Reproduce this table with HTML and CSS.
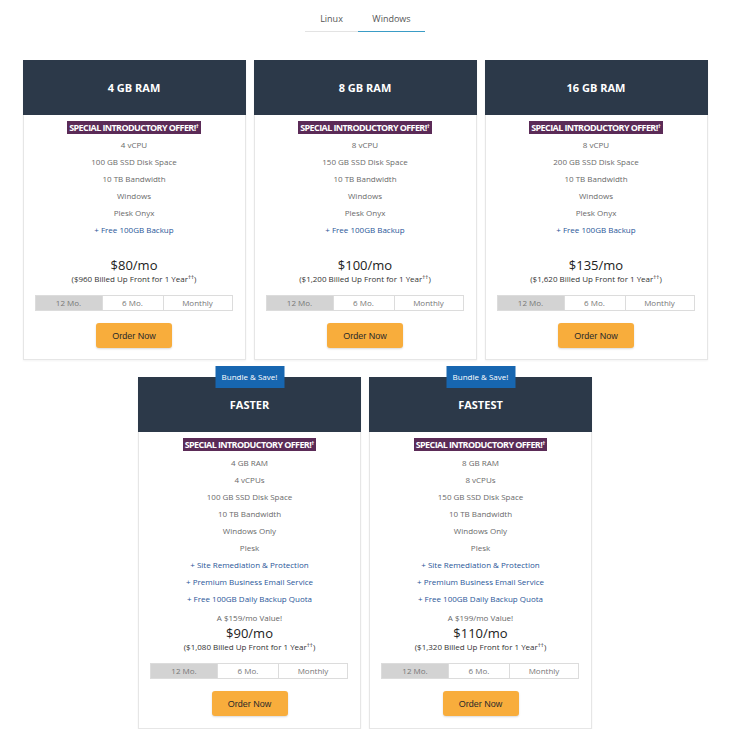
FILE: index.html
```html
<!DOCTYPE html>
<html>
<head>
<meta charset="utf-8">
<link rel="stylesheet" href="styles.css">
</head>
<body>
<div class="page">
  <div class="tabs">
    <div class="tab tab-linux">Linux</div>
    <div class="tab tab-windows active">Windows</div>
  </div>

  <div class="row">
    <div class="card">
      <div class="card-head">4 GB RAM</div>
      <div class="card-body">
        <div class="offer">SPECIAL INTRODUCTORY OFFER!<sup>†</sup></div>
        <ul class="features">
          <li>4 vCPU</li>
          <li>100 GB SSD Disk Space</li>
          <li>10 TB Bandwidth</li>
          <li>Windows</li>
          <li>Plesk Onyx</li>
          <li class="extra">+ Free 100GB Backup</li>
        </ul>
        <div class="price price-first">$80/mo</div>
        <div class="billed">($960 Billed Up Front for 1 Year<sup>††</sup>)</div>
        <div class="seg"><span class="on s1">12 Mo.</span><span class="s2">6 Mo.</span><span class="s3">Monthly</span></div>
        <button class="order">Order Now</button>
      </div>
    </div>
    <div class="card">
      <div class="card-head">8 GB RAM</div>
      <div class="card-body">
        <div class="offer">SPECIAL INTRODUCTORY OFFER!<sup>†</sup></div>
        <ul class="features">
          <li>8 vCPU</li>
          <li>150 GB SSD Disk Space</li>
          <li>10 TB Bandwidth</li>
          <li>Windows</li>
          <li>Plesk Onyx</li>
          <li class="extra">+ Free 100GB Backup</li>
        </ul>
        <div class="price price-first">$100/mo</div>
        <div class="billed">($1,200 Billed Up Front for 1 Year<sup>††</sup>)</div>
        <div class="seg"><span class="on s1">12 Mo.</span><span class="s2">6 Mo.</span><span class="s3">Monthly</span></div>
        <button class="order">Order Now</button>
      </div>
    </div>
    <div class="card">
      <div class="card-head">16 GB RAM</div>
      <div class="card-body">
        <div class="offer">SPECIAL INTRODUCTORY OFFER!<sup>†</sup></div>
        <ul class="features">
          <li>8 vCPU</li>
          <li>200 GB SSD Disk Space</li>
          <li>10 TB Bandwidth</li>
          <li>Windows</li>
          <li>Plesk Onyx</li>
          <li class="extra">+ Free 100GB Backup</li>
        </ul>
        <div class="price price-first">$135/mo</div>
        <div class="billed">($1,620 Billed Up Front for 1 Year<sup>††</sup>)</div>
        <div class="seg"><span class="on s1">12 Mo.</span><span class="s2">6 Mo.</span><span class="s3">Monthly</span></div>
        <button class="order">Order Now</button>
      </div>
    </div>
  </div>

  <div class="row row2">
    <div class="card">
      <div class="bundle">Bundle &amp; Save!</div>
      <div class="card-head">FASTER</div>
      <div class="card-body">
        <div class="offer">SPECIAL INTRODUCTORY OFFER!<sup>†</sup></div>
        <ul class="features">
          <li>4 GB RAM</li>
          <li>4 vCPUs</li>
          <li>100 GB SSD Disk Space</li>
          <li>10 TB Bandwidth</li>
          <li>Windows Only</li>
          <li>Plesk</li>
          <li class="extra">+ Site Remediation &amp; Protection</li>
          <li class="extra">+ Premium Business Email Service</li>
          <li class="extra">+ Free 100GB Daily Backup Quota</li>
        </ul>
        <div class="value">A $159/mo Value!</div>
        <div class="price">$90/mo</div>
        <div class="billed">($1,080 Billed Up Front for 1 Year<sup>††</sup>)</div>
        <div class="seg"><span class="on s1">12 Mo.</span><span class="s2">6 Mo.</span><span class="s3">Monthly</span></div>
        <button class="order">Order Now</button>
      </div>
    </div>
    <div class="card">
      <div class="bundle">Bundle &amp; Save!</div>
      <div class="card-head">FASTEST</div>
      <div class="card-body">
        <div class="offer">SPECIAL INTRODUCTORY OFFER!<sup>†</sup></div>
        <ul class="features">
          <li>8 GB RAM</li>
          <li>8 vCPUs</li>
          <li>150 GB SSD Disk Space</li>
          <li>10 TB Bandwidth</li>
          <li>Windows Only</li>
          <li>Plesk</li>
          <li class="extra">+ Site Remediation &amp; Protection</li>
          <li class="extra">+ Premium Business Email Service</li>
          <li class="extra">+ Free 100GB Daily Backup Quota</li>
        </ul>
        <div class="value">A $199/mo Value!</div>
        <div class="price">$110/mo</div>
        <div class="billed">($1,320 Billed Up Front for 1 Year<sup>††</sup>)</div>
        <div class="seg"><span class="on s1">12 Mo.</span><span class="s2">6 Mo.</span><span class="s3">Monthly</span></div>
        <button class="order">Order Now</button>
      </div>
    </div>
  </div>
</div>
</body>
</html>
```

FILE: styles.css
```css
* { box-sizing: border-box; }
html, body { margin: 0; padding: 0; background: #fff; }
body {
  font-family: "Open Sans", "DejaVu Sans", sans-serif;
  color: #666;
}
.page {
  width: 730px;
  padding-top: 8px;
}
.tabs {
  display: flex;
  justify-content: center;
  height: 24px;
  margin-bottom: 28px;
}
.tab {
  font-size: 9px;
  color: #555;
  text-align: center;
  line-height: 20px;
  padding-top: 1px;
}
.tab-linux {
  width: 53px;
  border-bottom: 1px solid #e3e3e3;
}
.tab-windows {
  width: 67px;
  border-bottom: 1px solid #3a9cc6;
}
.row {
  display: flex;
  justify-content: center;
  gap: 8px;
}
.row2 {
  margin-top: 17px;
}
.card {
  position: relative;
  width: 223px;
  border: 1px solid #e6e6e6;
  box-shadow: 0 1px 2px rgba(0,0,0,0.05);
  background: #fff;
}
.card-head {
  height: 55px;
  margin: -1px -1px 0 -1px;
  background: #2c3949;
  color: #fff;
  font-weight: 700;
  font-size: 11px;
  display: flex;
  align-items: center;
  justify-content: center;
  padding-bottom: 1px;
}
.bundle {
  position: absolute;
  top: -12px;
  left: 50%;
  transform: translateX(-50%);
  width: 69px;
  height: 22px;
  background: #1766b0;
  color: #fff;
  font-size: 8px;
  line-height: 22px;
  text-align: center;
  z-index: 2;
}
.card-body {
  display: flex;
  flex-direction: column;
  align-items: center;
  padding: 6px 0 11px;
}
.row2 .card-body {
  padding-bottom: 12px;
}
.offer {
  background: #5b2b57;
  color: #fff;
  font-weight: 700;
  font-size: 9px;
  letter-spacing: -0.6px;
  height: 13px;
  line-height: 13px;
  padding: 0 2px;
  white-space: nowrap;
}
.offer sup, .billed sup {
  font-size: 6px;
  line-height: 0;
  vertical-align: 3px;
  letter-spacing: 0;
}
.features {
  list-style: none;
  margin: 2px 0 0;
  padding: 0;
  text-align: center;
}
.row2 .features {
  margin-top: 3px;
}
.features li {
  font-size: 8px;
  line-height: 17px;
  height: 17px;
  color: #6a6a6a;
}
.features li.extra {
  color: #2a5698;
}
.value {
  margin-top: 4px;
  font-size: 8px;
  line-height: 14px;
  color: #666;
}
.price {
  font-size: 13px;
  line-height: 16px;
  color: #222;
}
.price-first {
  margin-top: 19px;
}
.billed {
  font-size: 8px;
  line-height: 12px;
  color: #333;
}
.seg {
  display: flex;
  margin-top: 10px;
  width: 198px;
  height: 16px;
  border: 1px solid #dcdcdc;
  margin-left: -1px;
}
.seg span {
  font-size: 8px;
  line-height: 14px;
  text-align: center;
  color: #777;
  border-left: 1px solid #dcdcdc;
}
.seg span.s1 { width: 66px; border-left: none; }
.seg span.s2 { width: 61px; }
.seg span.s3 { flex: 1; }
.seg span.on {
  background: #d3d3d3;
}
.order {
  margin-top: 12px;
  width: 76px;
  height: 25px;
  border: none;
  border-radius: 3px;
  background: #f8ad3c;
  color: #2a2a2a;
  font-family: "Liberation Sans", Arial, sans-serif;
  font-size: 9px;
  box-shadow: 0 1px 2px rgba(0,0,0,0.15);
  padding: 0;
}
```
